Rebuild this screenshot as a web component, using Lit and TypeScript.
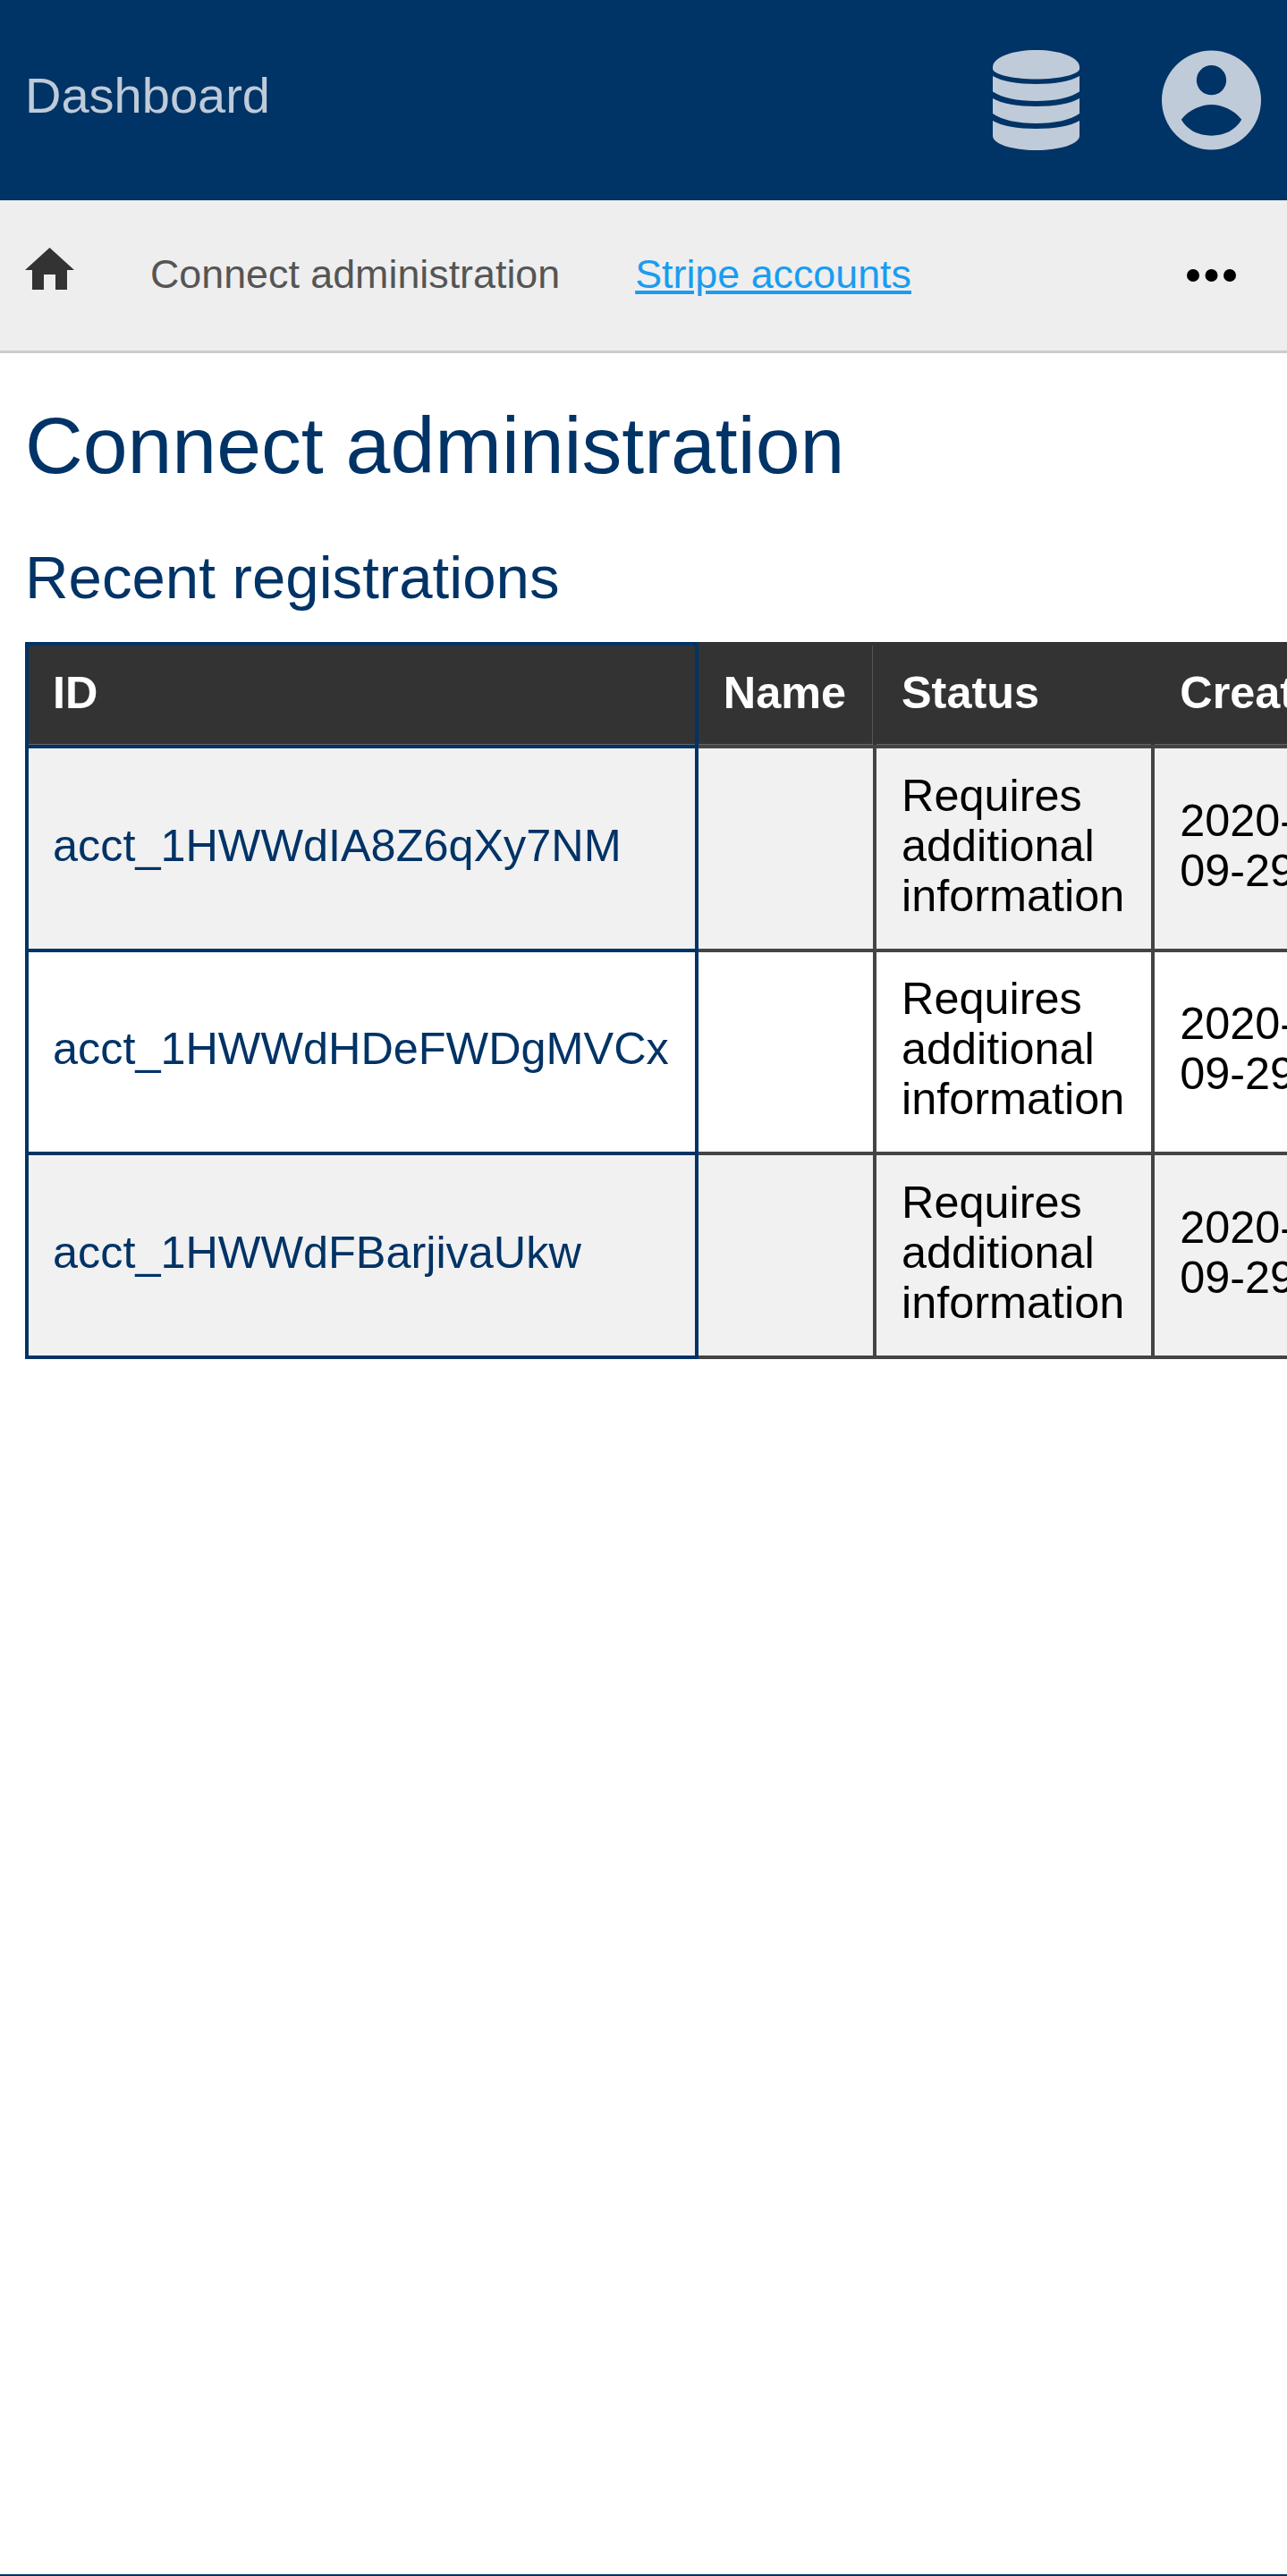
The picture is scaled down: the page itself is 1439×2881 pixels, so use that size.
import { LitElement, css, html } from 'lit';
import { customElement } from 'lit/decorators.js';

const rows = [
  { id: 'acct_1HWWdIA8Z6qXy7NM', date: '2020-09-29' },
  { id: 'acct_1HWWdHDeFWDgMVCx', date: '2020-09-29' },
  { id: 'acct_1HWWdFBarjivaUkw', date: '2020-09-29' },
];

@customElement('app-root')
export class AppRoot extends LitElement {
  static styles = css`
    :host {
      display: block;
      height: 2881px;
      box-sizing: border-box;
      border-bottom: 2px solid #036;
      font-family: 'Liberation Sans', Arial, sans-serif;
      background: #fff;
      overflow: hidden;
    }
    .top {
      display: flex;
      align-items: center;
      height: 224px;
      padding: 0 29px 0 28px;
      background: #036;
    }
    .brand {
      flex: 1;
      padding-bottom: 12px;
      font-size: 56px;
      color: #bfcbd8;
    }
    .db {
      width: 97px;
      height: 112px;
      margin-right: 92px;
      fill: #bfcbd8;
    }
    .user {
      width: 111px;
      height: 112px;
      fill: #bfcbd8;
    }
    .nav {
      display: flex;
      align-items: center;
      box-sizing: border-box;
      height: 171px;
      padding: 0 28px 3px;
      background: #eee;
      border-bottom: 3px solid #ccc;
      font-size: 44.8px;
    }
    .home {
      width: 55px;
      height: 48px;
      margin: 0 85px 12px 0;
      fill: #333;
    }
    .crumb {
      color: #555;
      margin-right: 84px;
    }
    .link {
      flex: 1;
      color: #1a9cf0;
      text-decoration: underline;
    }
    .more {
      width: 55px;
      height: 14px;
      margin: 3px 29px 0 0;
      fill: #000;
    }
    main {
      padding: 0 0 0 28px;
    }
    h1 {
      margin: 50px 0 0;
      font-size: 89.6px;
      line-height: 106px;
      font-weight: 400;
      color: #036;
    }
    h2 {
      margin: 55px 0 0;
      font-size: 67.2px;
      line-height: 79px;
      font-weight: 400;
      color: #036;
    }
    table {
      margin-top: 33px;
      border-collapse: collapse;
      font-size: 50.4px;
      line-height: 56px;
    }
    th {
      padding: 25px 28px 30px;
      background: #333;
      color: #fff;
      font-weight: 700;
      text-align: left;
      border: 4px solid #333;
      border-bottom-color: #444;
      box-shadow: inset 0 -1px 0 rgba(255, 255, 255, 0.25);
      white-space: nowrap;
    }
    th.name {
      padding-right: 30px;
      box-shadow:
        inset 0 -1px 0 rgba(255, 255, 255, 0.25),
        inset -1px 0 0 #555;
    }
    td {
      padding: 24.67px 28px 31px;
      border: 4px solid #444;
    }
    tr:nth-child(odd) td {
      background: #f1f1f1;
    }
    th.key,
    td.key {
      padding-left: 27px;
      padding-right: 29px;
      border-color: #036;
      white-space: nowrap;
    }
    td.key {
      color: #036;
    }
    .status {
      width: 250px;
      padding-right: 30px;
    }
  `;

  render() {
    return html`
      <header class="top">
        <div class="brand">Dashboard</div>
        <svg class="db" viewBox="0 0 97 112">
          <path d="M0 19C0 8 22 0 48.5 0S97 8 97 19V21C97 27 75 32.500 48.5 32.500S0 27 0 21Z" />
          <path d="M0 29C10 35 28 38 48.5 38S87 35 97 29V46.500C87 53 70 57 48.5 57S10 53 0 46.500Z" />
          <path d="M0 54C10 60 28 63 48.5 63S87 60 97 54V71C87 78 70 82 48.5 82S10 78 0 71Z" />
          <path d="M0 79C10 85 28 88 48.5 88S87 85 97 79V96C97 105 75 112 48.5 112S0 105 0 96Z" />
        </svg>
        <svg class="user" viewBox="0 0 112 112">
          <path
            fill-rule="evenodd"
            d="M56 0A56 56 0 1 1 56 112A56 56 0 1 1 56 0ZM56 16.700A16.800 16.800 0 1 0 56 50.300A16.800 16.800 0 1 0 56 16.700ZM22 78C30 67 45 61 56 61C67 61 82 67 90 78C83 90 71 96 56 96C41 96 29 90 22 78Z"
          />
        </svg>
      </header>
      <nav class="nav">
        <svg class="home" viewBox="0 0 55 48">
          <path d="M27.500 0L55 25H47V47H34V30H21V47H8V25H0Z" />
        </svg>
        <span class="crumb">Connect administration</span>
        <span class="link">Stripe accounts</span>
        <svg class="more" viewBox="0 0 55 14">
          <circle cx="7" cy="7" r="7" />
          <circle cx="27.500" cy="7" r="7" />
          <circle cx="48" cy="7" r="7" />
        </svg>
      </nav>
      <main>
        <h1>Connect administration</h1>
        <h2>Recent registrations</h2>
        <table>
          <thead>
            <tr>
              <th class="key">ID</th>
              <th class="name">Name</th>
              <th class="status">Status</th>
              <th>Created</th>
            </tr>
          </thead>
          <tbody>
            ${rows.map(
              (r) => html`
                <tr>
                  <td class="key">${r.id}</td>
                  <td></td>
                  <td class="status">Requires additional information</td>
                  <td>${r.date}</td>
                </tr>
              `
            )}
          </tbody>
        </table>
      </main>
    `;
  }
}
